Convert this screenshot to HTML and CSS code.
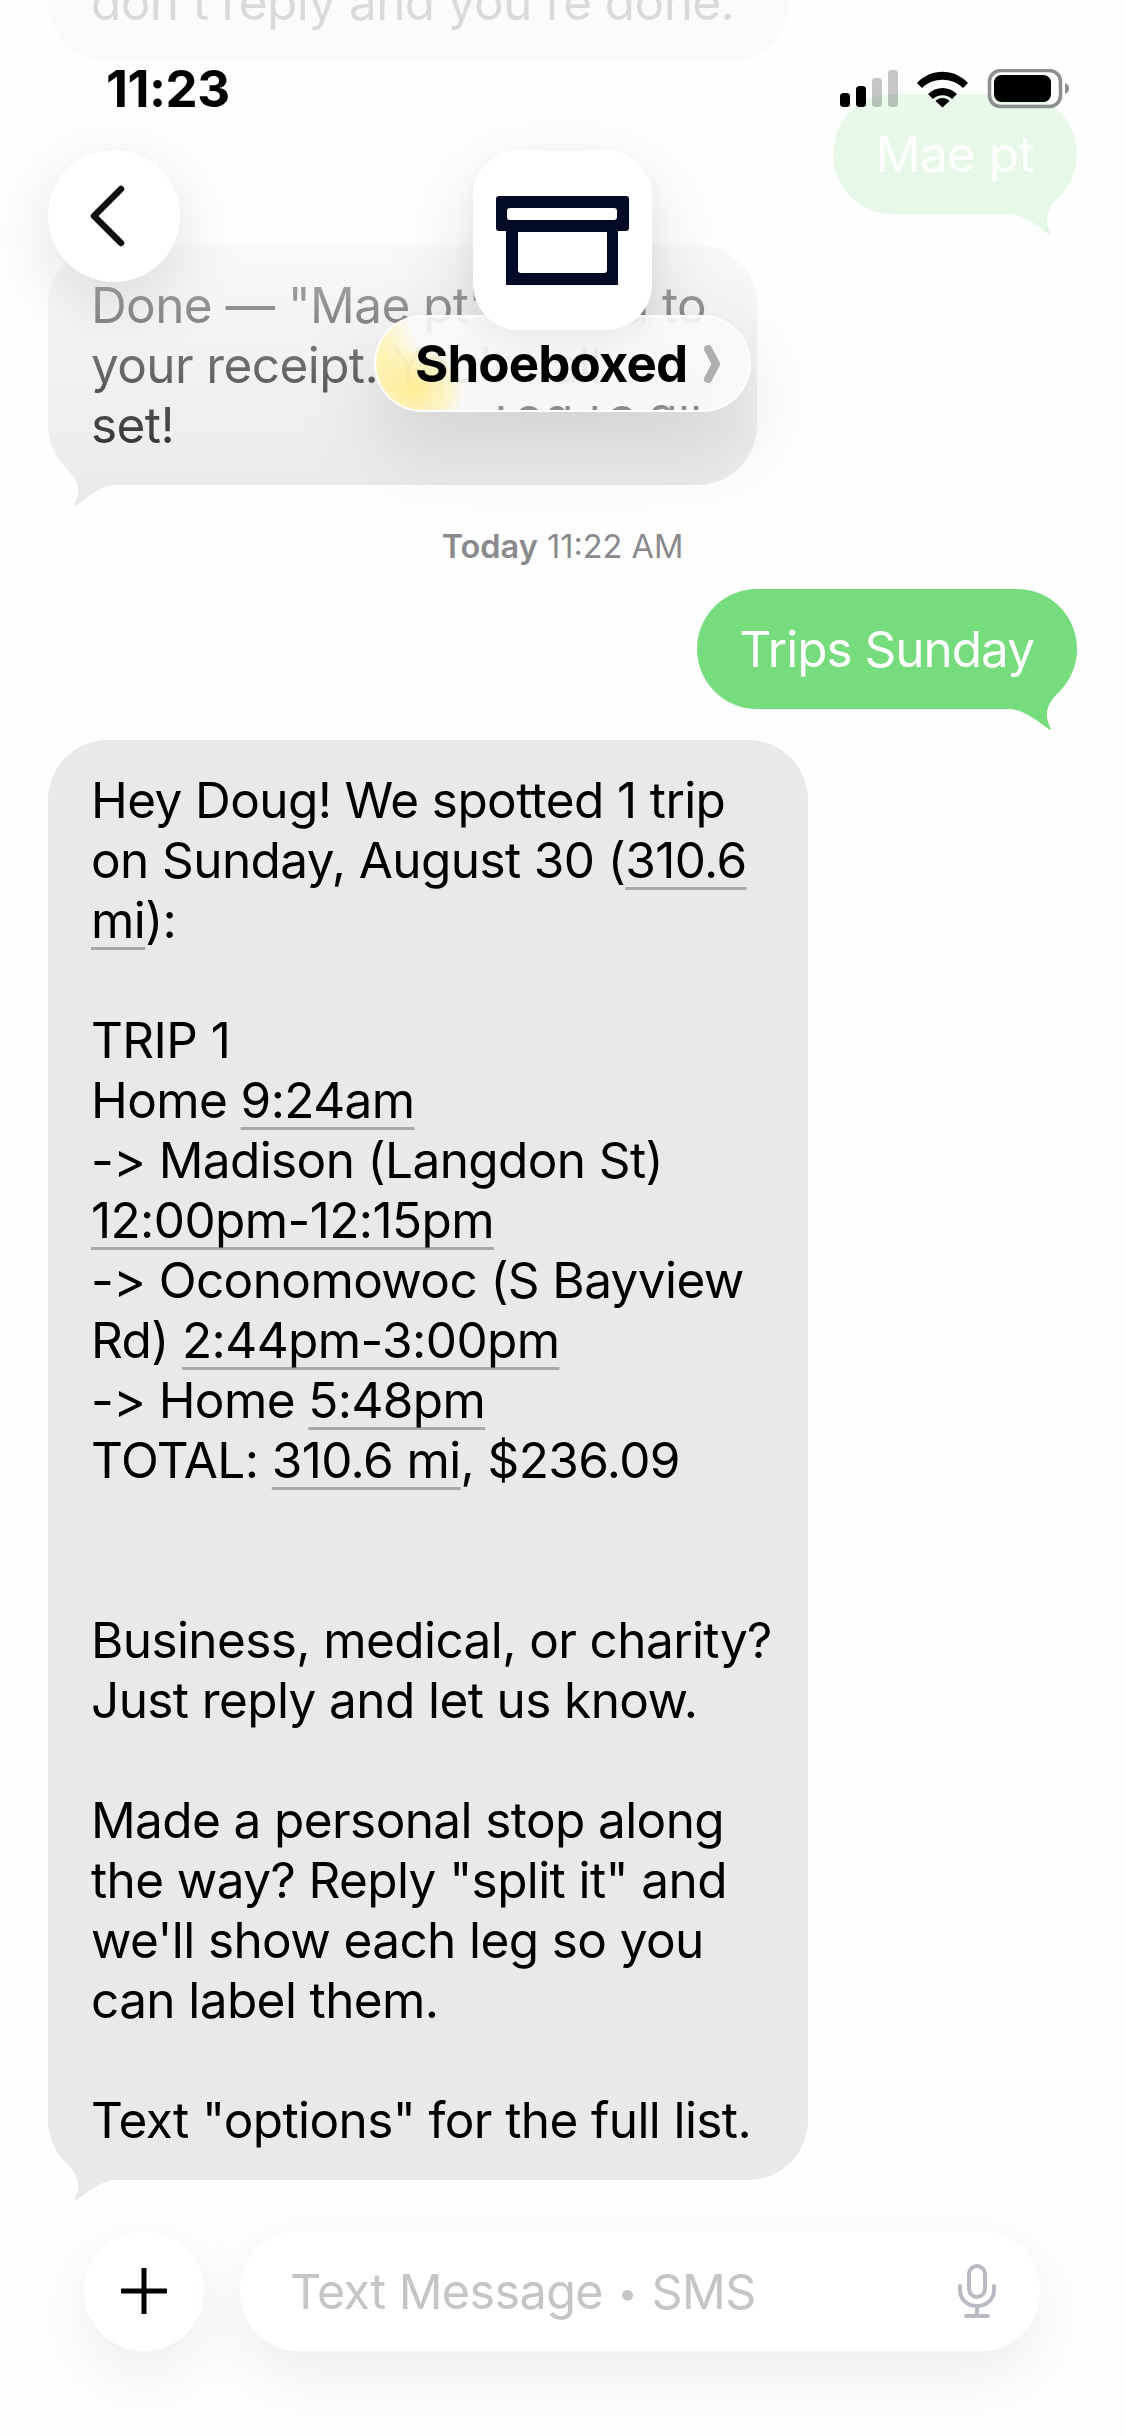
FILE: index.html
```html
<!DOCTYPE html>
<html lang="en">

<head>
    <meta charset="UTF-8">
    <meta name="viewport" content="width=device-width, initial-scale=1.0">
    <title>Shoeboxed</title>
    <link rel="stylesheet" href="styles.css">
</head>

<body>
    <svg class="defs" width="0" height="0">
        <symbol id="tail" viewBox="0 0 70 85">
            <path d="M0 0C2 20 10 35 20 45C30 55 33 65 27 78C25 82 27 81 30 79C42 70 52 62 66 60L70 0Z" />
        </symbol>
    </svg>

    <main class="thread">
        <div class="bubble in bubble-cut">don't reply and you're done.</div>

        <div class="bubble out bubble-mae">Mae pt<svg class="tail"><use href="#tail" /></svg></div>

        <div class="bubble in bubble-done">Done — "Mae pt" added to
your receipt. You're all
set!<svg class="tail"><use href="#tail" /></svg></div>

        <div class="stamp"><b>Today</b> 11:22 AM</div>

        <div class="bubble out bubble-trips">Trips Sunday<svg class="tail"><use href="#tail" /></svg></div>

        <div class="bubble in bubble-main">Hey Doug! We spotted 1 trip
on Sunday, August 30 (<u>310.6
mi</u>):

TRIP 1
Home <u>9:24am</u>
-&gt; Madison (Langdon St)
<u>12:00pm-12:15pm</u>
-&gt; Oconomowoc (S Bayview
Rd) <u>2:44pm-3:00pm</u>
-&gt; Home <u>5:48pm</u>
TOTAL: <u>310.6 mi</u>, $236.09


Business, medical, or charity?
Just reply and let us know.

Made a personal stop along
the way? Reply "split it" and
we'll show each leg so you
can label them.

Text "options" for the full list.<svg class="tail"><use href="#tail" /></svg></div>
    </main>

    <div class="fade"></div>

    <div class="statusbar">
        <span class="time">11:23</span>
        <svg class="status-icons" width="230" height="40" viewBox="0 0 230 40">
            <rect x="1" y="24" width="10" height="14" rx="3.5" />
            <rect x="17" y="17" width="10" height="21" rx="3.5" />
            <rect x="33" y="9" width="10" height="29" rx="3.5" opacity="0.22" />
            <rect x="49" y="1" width="10" height="37" rx="3.5" opacity="0.22" />
            <path d="M78 14C92 -1 115 -1 129 14L124 19C113 8 94 8 83 19Z" />
            <path d="M89 25C97 17 110 17 118 25L113 30C108 25 99 25 94 30Z" />
            <path d="M96.500 32C100 28 107 28 110.500 32L103.500 38.500Z" />
            <rect x="150.500" y="1.500" width="71" height="36" rx="11" fill="none" stroke="#8e8e8e" stroke-width="3.500" />
            <rect x="155" y="6" width="57" height="27" rx="7.500" />
            <path d="M226 14C229 15 230 17 230 19.500C230 22 229 24 226 25Z" fill="#8e8e8e" />
        </svg>
    </div>

    <button class="back">
        <svg width="40" height="64" viewBox="0 0 40 64">
            <path d="M34 5L7 32L34 59" />
        </svg>
    </button>

    <div class="contact">
        <div class="logo">
            <svg width="133" height="89" viewBox="0 0 133 89">
                <path fill-rule="evenodd" d="M3 0H130A3 3 0 0 1 133 3V32A3 3 0 0 1 130 35H122V89H10V35H3A3 3 0 0 1 0 32V3A3 3 0 0 1 3 0ZM14 12A3 3 0 0 0 11 15V21A3 3 0 0 0 14 24H118A3 3 0 0 0 121 21V15A3 3 0 0 0 118 12ZM22 36V74A3 3 0 0 0 25 77H108A3 3 0 0 0 111 74V36Z" />
            </svg>
        </div>
        <div class="pill">
            <span class="pill-reflect" aria-hidden="true">You're all</span>
            <span class="pill-name">Shoeboxed</span>
            <svg class="pill-arrow" width="16" height="38" viewBox="0 0 16 38">
                <path d="M4 4L12 19L4 34" />
            </svg>
        </div>
    </div>

    <div class="composer">
        <button class="plus">
            <svg width="46" height="46" viewBox="0 0 46 46">
                <path d="M23 1V45M1 23H45" />
            </svg>
        </button>
        <div class="field">
            <span class="placeholder">Text Message <span class="placeholder-dot">•</span> SMS</span>
            <svg class="mic" width="38" height="54" viewBox="0 0 38 54">
                <rect x="11" y="2" width="16" height="31" rx="8" />
                <path d="M2 22V26C2 35 9 42 19 42C29 42 36 35 36 26V22M19 42V52M8 52H30" />
            </svg>
        </div>
    </div>
</body>

</html>
```

FILE: styles.css
```css
body {
    font-family: Inter, "Liberation Sans", sans-serif;
    margin: 0;
    padding: 0;
    width: 1125px;
    height: 2436px;
    overflow: hidden;
    position: relative;
    background-color: #fefefe;
    color: #000;
}

.defs {
    position: absolute;
}

.thread {
    display: flex;
    flex-direction: column;
    padding: 0 48px;
}

.bubble {
    position: relative;
    z-index: 0;
    box-sizing: border-box;
    padding: 30px 43px;
    border-radius: 60px;
    font-size: 49.500px;
    letter-spacing: -0.6px;
    line-height: 60px;
    white-space: pre-line;
}

.bubble u {
    text-decoration-color: #a9a9a9;
    text-decoration-thickness: 3px;
    text-decoration-skip-ink: none;
    text-underline-offset: 9px;
}

.in {
    align-self: flex-start;
    background-color: #e9e9e9;
}

.out {
    align-self: flex-end;
    background-color: #77dc7d;
    color: #fff;
}

.tail {
    position: absolute;
    z-index: -1;
    bottom: -25px;
    left: 0;
    width: 70px;
    height: 85px;
    fill: #e9e9e9;
}

.out .tail {
    left: auto;
    right: 0;
    fill: #77dc7d;
    transform: scaleX(-1);
}

.bubble-cut {
    width: 742px;
    margin-top: -58px;
}

.bubble-mae {
    margin-top: 32px;
}

.bubble-done {
    width: 709px;
    margin-top: 31px;
}

.stamp {
    align-self: center;
    margin-top: 44px;
    font-size: 32.500px;
    line-height: 36px;
    color: #8a8a8e;
}

.stamp b {
    font-weight: 600;
}

.bubble-trips {
    margin-top: 24px;
    letter-spacing: -1px;
}

.bubble-main {
    width: 760px;
    margin-top: 31px;
    padding-right: 10px;
}

/* frosted wash over the top of the thread */
.fade {
    position: absolute;
    top: 0;
    left: 0;
    width: 100%;
    height: 520px;
    background: linear-gradient(to bottom, rgba(254, 254, 254, 0.86) 0, rgba(254, 254, 254, 0.82) 220px, rgba(254, 254, 254, 0.56) 310px, rgba(254, 254, 254, 0.25) 430px, rgba(254, 254, 254, 0) 520px);
}

.statusbar {
    position: absolute;
    top: 69px;
    left: 106px;
    width: 963px;
    display: flex;
    justify-content: space-between;
    align-items: center;
}

.time {
    font-size: 51px;
    font-weight: 700;
    letter-spacing: -0.5px;
    line-height: 40px;
}

.status-icons {
    fill: #000;
}

button {
    border: none;
    padding: 0;
    cursor: pointer;
}

.back {
    position: absolute;
    top: 150px;
    left: 48px;
    width: 132px;
    height: 132px;
    display: flex;
    justify-content: center;
    align-items: center;
    border-radius: 50%;
    background-color: #fff;
    box-shadow: 0 20px 70px rgba(0, 0, 0, 0.12);
}

.back svg {
    margin-right: 14px;
    fill: none;
    stroke: #111;
    stroke-width: 6.500px;
    stroke-linecap: round;
    stroke-linejoin: round;
}

.contact {
    position: absolute;
    top: 150px;
    left: 374px;
    width: 377px;
    height: 262px;
    filter: drop-shadow(0 34px 40px rgba(0, 0, 0, 0.13));
}

.logo {
    position: absolute;
    top: 0;
    left: 99px;
    z-index: 2;
    width: 179px;
    height: 180px;
    display: flex;
    justify-content: center;
    border-radius: 46px;
    background-color: #fff;
    box-shadow: 0 10px 30px rgba(0, 0, 0, 0.05);
}

.logo svg {
    margin-top: 46px;
    fill: #020b26;
}

.pill {
    position: absolute;
    bottom: 0;
    left: 0;
    box-sizing: border-box;
    width: 377px;
    height: 97px;
    display: flex;
    align-items: center;
    gap: 17px;
    padding-left: 39px;
    overflow: hidden;
    border-radius: 49px;
    background: radial-gradient(ellipse 50px 44px at 38px 72px, rgba(255, 232, 120, 0.8), rgba(255, 240, 160, 0.45) 75%, rgba(255, 255, 255, 0) 100%), radial-gradient(ellipse 34px 60px at 8px 40px, rgba(255, 240, 150, 0.75), rgba(255, 255, 255, 0) 100%), rgba(250, 250, 250, 0.9);
    border: 2px solid rgba(255, 255, 255, 0.9);
}

.pill-reflect {
    position: absolute;
    top: 77px;
    left: 108px;
    font-size: 50px;
    line-height: 60px;
    color: #8c8c8c;
    filter: blur(0.6px);
    transform: scaleY(-1);
}

.pill-name {
    position: relative;
    font-size: 51px;
    font-weight: 700;
    letter-spacing: -0.9px;
}

.pill-arrow {
    position: relative;
    fill: none;
    stroke: #aeaeae;
    stroke-width: 8px;
    stroke-linecap: round;
    stroke-linejoin: round;
}

.composer {
    position: absolute;
    top: 2231px;
    left: 84px;
    display: flex;
    gap: 36px;
}

.plus {
    width: 120px;
    height: 120px;
    display: flex;
    justify-content: center;
    align-items: center;
    border-radius: 50%;
    background-color: #fff;
    box-shadow: 0 24px 70px rgba(0, 0, 0, 0.07);
}

.plus svg {
    fill: none;
    stroke: #000;
    stroke-width: 5px;
    stroke-linecap: round;
}

.field {
    box-sizing: border-box;
    width: 800px;
    height: 120px;
    display: flex;
    justify-content: space-between;
    align-items: center;
    padding: 0 44px 0 50px;
    border-radius: 60px;
    background-color: #fff;
    box-shadow: 0 24px 70px rgba(0, 0, 0, 0.07);
}

.placeholder {
    font-size: 48.500px;
    letter-spacing: -0.6px;
    color: #c5c5c7;
}

.placeholder-dot {
    font-size: 34px;
    margin: 0 2px;
    vertical-align: 4px;
}

.mic {
    fill: none;
    stroke: #b9bbc2;
    stroke-width: 4px;
    stroke-linecap: round;
}
```
